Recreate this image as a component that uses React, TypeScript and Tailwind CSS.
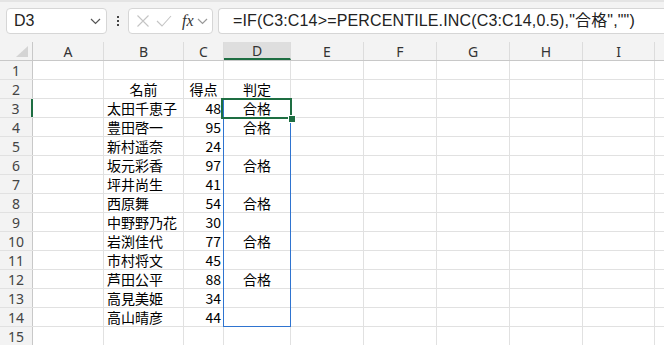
import React from 'react';

const cols = [
  { key: 'A', w: 'w-[71px]' },
  { key: 'B', w: 'w-[80px]' },
  { key: 'C', w: 'w-[40px]' },
  { key: 'D', w: 'w-[67px]' },
  { key: 'E', w: 'w-[73px]' },
  { key: 'F', w: 'w-[73px]' },
  { key: 'G', w: 'w-[73px]' },
  { key: 'H', w: 'w-[73px]' },
  { key: 'I', w: 'w-[72px]' },
  { key: '', w: 'w-[80px]' },
];

type Row = { b?: string; c?: string; d?: string; head?: boolean };

const rows: Row[] = [
  {},
  { b: '名前', c: '得点', d: '判定', head: true },
  { b: '太田千恵子', c: '48', d: '合格' },
  { b: '豊田啓一', c: '95', d: '合格' },
  { b: '新村遥奈', c: '24' },
  { b: '坂元彩香', c: '97', d: '合格' },
  { b: '坪井尚生', c: '41' },
  { b: '西原舞', c: '54', d: '合格' },
  { b: '中野野乃花', c: '30' },
  { b: '岩渕佳代', c: '77', d: '合格' },
  { b: '市村将文', c: '45' },
  { b: '芦田公平', c: '88', d: '合格' },
  { b: '高見美姫', c: '34' },
  { b: '高山晴彦', c: '44' },
  {},
];

function Chevron({ className }: { className?: string }) {
  return (
    <svg width="11" height="7" viewBox="0 0 11 7" className={className}>
      <path d="M1 1l4.5 4.5L10 1" fill="none" stroke="currentColor" strokeWidth="1.2" />
    </svg>
  );
}

function FormulaBar() {
  return (
    <div className="h-[42px] bg-[#f3f3f3] border-t-2 border-[#e4e4e4] flex items-start pt-[6px] pl-[6px]">
      <div className="w-[101px] h-[26px] bg-white border border-[#d6d6d6] rounded-[4px] flex items-center pl-[7px] pr-[5px]">
        <span className="text-[16px] text-[#222] font-['Liberation_Sans',sans-serif] flex-1">D3</span>
        <Chevron className="text-[#555]" />
      </div>
      <div className="w-[21px] h-[26px] flex flex-col items-center justify-center gap-[2px]">
        <span className="w-[2px] h-[2px] bg-[#444]" />
        <span className="w-[2px] h-[2px] bg-[#444]" />
        <span className="w-[2px] h-[2px] bg-[#444]" />
      </div>
      <div className="w-[85px] h-[26px] bg-white border border-[#d6d6d6] rounded-[4px] flex items-center pl-[7px] gap-[6px]">
        <svg width="14" height="14" viewBox="0 0 14 14">
          <path d="M1.5 1.5l11 11M12.5 1.5l-11 11" stroke="#c4c4c4" strokeWidth="1.1" />
        </svg>
        <svg width="16" height="14" viewBox="0 0 16 14">
          <path d="M1 7l5 5L15 2" fill="none" stroke="#c4c4c4" strokeWidth="1.1" />
        </svg>
        <span className="text-[16px] italic text-[#333] font-['Liberation_Serif',serif] ml-[4px] leading-none">fx</span>
        <Chevron className="text-[#999] -ml-[3px]" />
      </div>
      <div className="flex-1 ml-[5px] h-[26px] bg-white border border-[#d6d6d6] border-r-0 rounded-l-[4px] flex items-center pl-[14px]">
        <span className="text-[16px] tracking-[0.15px] text-[#222] whitespace-nowrap font-['Liberation_Sans','Noto_Sans_CJK_JP',sans-serif]">
          =IF(C3:C14&gt;=PERCENTILE.INC(C3:C14,0.5),"合格","")
        </span>
      </div>
    </div>
  );
}

function ColumnHeader() {
  return (
    <div className="flex h-[19px] bg-[#f3f3f3] border-b border-[#c8c8c8]">
      <div className="w-[33px] shrink-0 border-r border-[#c8c8c8] relative">
        <svg width="12" height="11" viewBox="0 0 12 11" className="absolute right-[4px] bottom-[3px]">
          <path d="M12 0V11H0z" fill="#d4d4d4" />
        </svg>
      </div>
      {cols.map((c, i) => (
        <div
          key={i}
          className={`${c.w} shrink-0 border-r border-[#dcdcdc] flex items-center justify-center text-[14px] text-[#333] font-['Noto_Sans',sans-serif] ${
            c.key === 'D' ? 'bg-[#dedede] border-b-2 border-b-[#1e6e42]' : ''
          }`}
        >
          {c.key}
        </div>
      ))}
    </div>
  );
}

function GridRow({ row, n }: { row: Row; n: number }) {
  const cell = 'shrink-0 h-full border-r border-[#e1e1e1] flex items-center overflow-visible whitespace-nowrap';
  return (
    <div className="flex h-[19px] border-b border-[#e1e1e1] text-[14px] text-black font-['Noto_Sans_CJK_JP',sans-serif]">
      <div
        className={`w-[33px] shrink-0 bg-[#f3f3f3] border-r flex items-center justify-center text-[14px] text-[#444] font-['Noto_Sans',sans-serif] ${
          n === 3 ? 'bg-[#dedede] border-r-2 border-[#1e6e42]' : 'border-[#c8c8c8]'
        }`}
      >
        {n}
      </div>
      <div className={`${cols[0].w} ${cell}`} />
      <div className={`${cols[1].w} ${cell} ${row.head ? 'justify-center' : 'pl-[3px]'}`}>{row.b}</div>
      <div className={`${cols[2].w} ${cell} ${row.head ? 'justify-center' : 'justify-end pr-[2px]'}`}>{row.c}</div>
      <div className={`${cols[3].w} ${cell} justify-center`}>{row.d}</div>
      {cols.slice(4).map((c, i) => (
        <div key={i} className={`${c.w} ${cell}`} />
      ))}
    </div>
  );
}

export default function App() {
  return (
    <div className="w-[664px] h-[345px] overflow-hidden bg-white">
      <FormulaBar />
      <ColumnHeader />
      <div className="relative">
        {rows.map((r, i) => (
          <GridRow key={i} row={r} n={i + 1} />
        ))}
        {/* range highlight */}
        <div className="absolute left-[223px] top-[38px] w-[68px] h-[228px] border border-[#2f74d0] pointer-events-none" />
        {/* active cell */}
        <div className="absolute left-[221px] top-[37px] w-[71px] h-[21px] border-2 border-[#1e6e42] pointer-events-none" />
        <div className="absolute left-[288px] top-[54px] w-[6px] h-[6px] bg-[#1e6e42] border border-white box-content" />
      </div>
    </div>
  );
}
